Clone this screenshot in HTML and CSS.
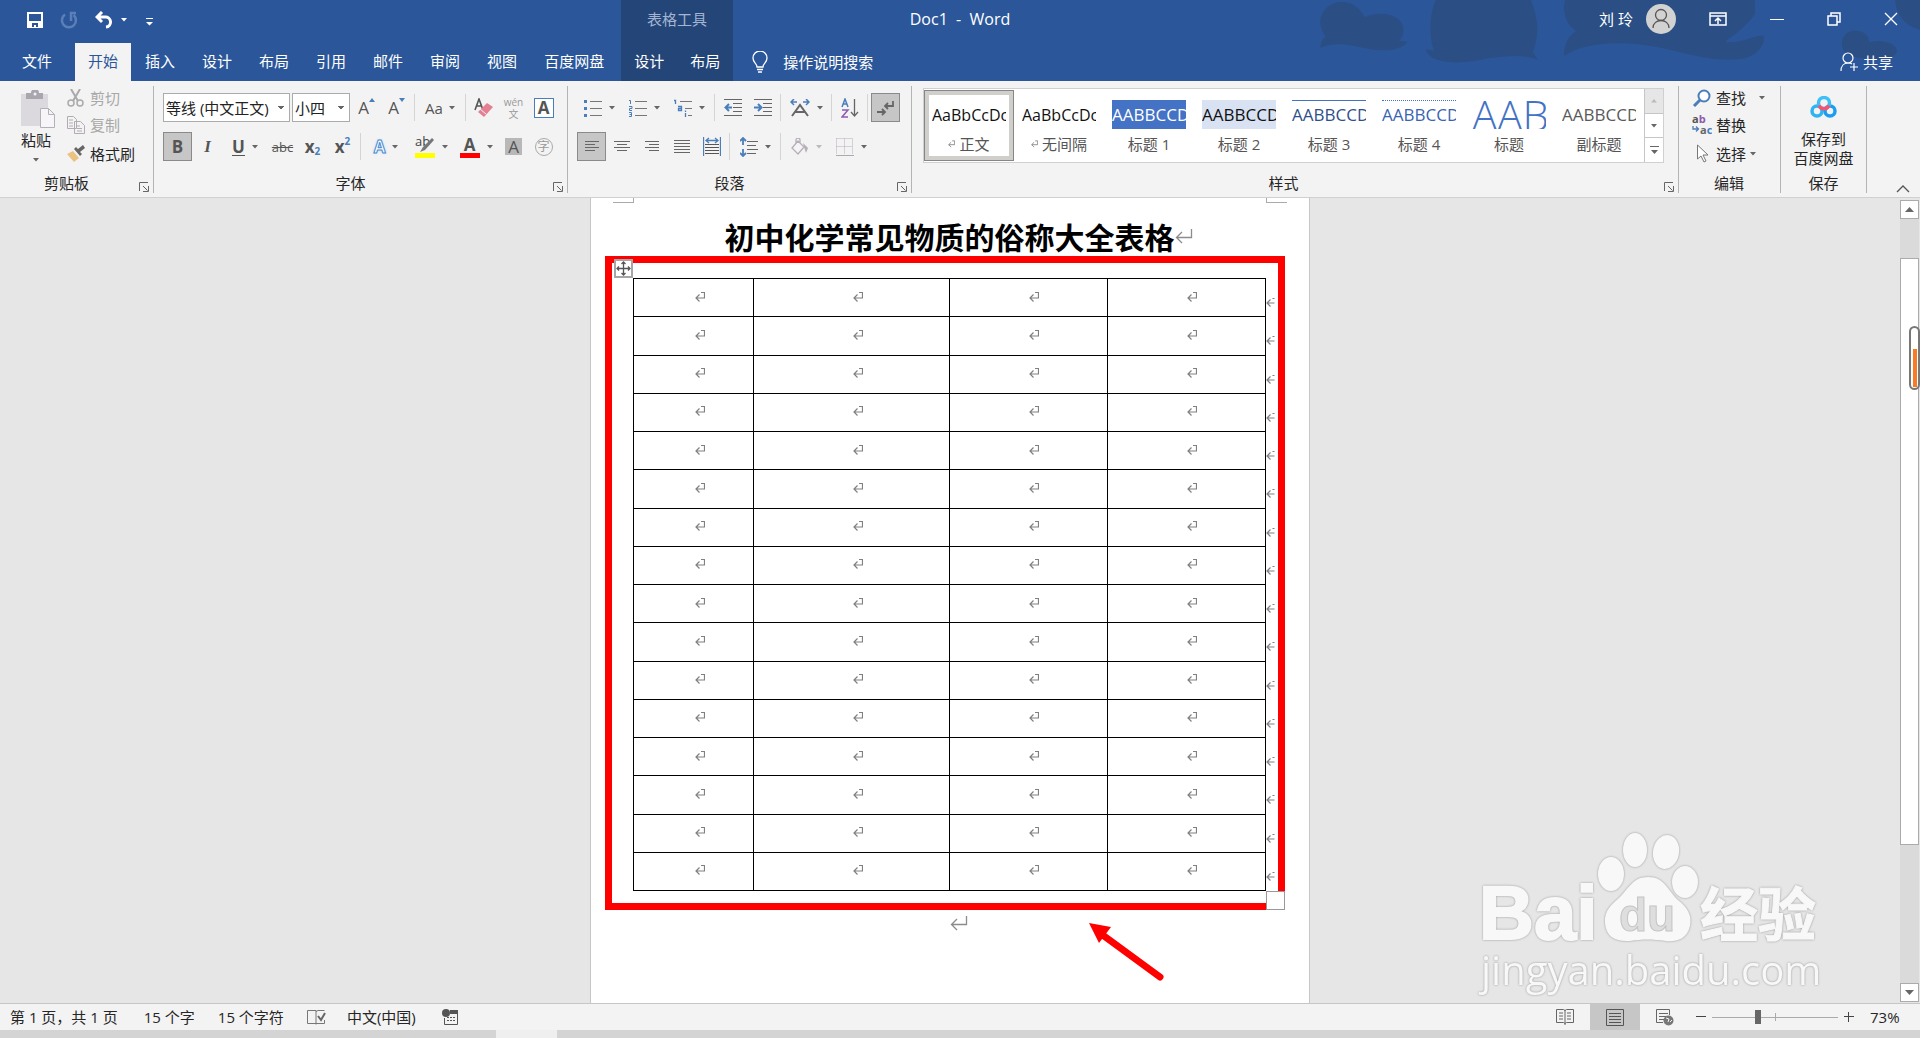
FILE: index.html
```html
<!DOCTYPE html>
<html lang="zh-CN">
<head>
  <meta charset="UTF-8" />
  <meta name="viewport" content="width=device-width, initial-scale=1.0" />
  <title>Doc1 - Word</title>
  <link rel="stylesheet" href="styles.css">
</head>
<body>

  <!-- shared symbols -->
  <svg class="defs" aria-hidden="true">
    <symbol id="mark" viewBox="0 0 10 10"><path d="M6 .5h3.500v5.500H1M4.500 2.500 1 6l3.500 3.500" fill="none" stroke="#808080" stroke-width="1.200"/></symbol>
    <symbol id="mark-end" viewBox="0 0 10 10"><path d="M6.500 1.500h2M1 6h7.500M4.500 2.500 1 6l3.500 3.500" fill="none" stroke="#808080" stroke-width="1.200"/></symbol>
    <symbol id="mark-big" viewBox="0 0 18 16"><path d="M16.500 1v8.500H1.500M7 4 1.500 9.500 7 15" fill="none" stroke="#8c8c8c" stroke-width="1.300"/></symbol>
    <symbol id="caret" viewBox="0 0 6 4"><path d="M0 0h6L3 3.500z" fill="currentColor"/></symbol>
    <symbol id="launch" viewBox="0 0 10 10"><path d="M.5 9V.5H9M4 4l4.500 4.500M9.500 4v5.500H4" fill="none" stroke="#666"/></symbol>
  </svg>

  <header class="header">
    <svg class="art" viewBox="0 0 630 81" aria-hidden="true">
      <path d="M30 48q2-12 6-11C24 22 32 4 50 2c12-1 20 6 25 15 14-6 34-4 38 9 2 8-2 13-4 15 6 0 10 0 7 3-12 10-34 6-52 2-14-3-26-2-34 2z"/>
      <path d="M146 0h95c8 20 8 36 2 52l5 8c-14-6-30-4-48-2-18 4-34 6-48 3-10-2-16-7-16-12l8 2C138 34 140 12 146 0z"/>
      <path d="M275 0h190v14c-8 12-22 22-30 28 18 2 30-8 39-6 2 10-10 22-24 23-34 4-62-10-96-14-28-4-62-2-80 11q0-18 12-25C276 24 272 12 275 0z"/>
      <path d="M552 46c-2-22 28-18 27-4 12-2 26 0 28 8 0 9-16 11-30 9-14-2-24-4-25-13zM605 0h25v30c-14-4-24-14-25-30z"/>
    </svg>

    <div class="titlebar">
      <div class="quick">
        <button aria-label="保存"><svg width="16" height="16" viewBox="0 0 16 16"><path d="M1 1h14v14H1z" fill="none" stroke="#fff" stroke-width="2"/><path d="M1 9h14v7H1z" fill="#fff"/><path d="M5 11h6v4H9v-2H7v2H5z" fill="#2b579a"/></svg></button>
        <button aria-label="重复"><svg width="18" height="18" viewBox="0 0 18 18"><path d="M5 3.500A7 7 0 1 0 13.500 4M11 10V2h5" fill="none" stroke="#5b7fb8" stroke-width="2.500"/></svg></button>
        <button aria-label="撤消"><svg width="18" height="18" viewBox="0 0 18 18"><path d="M3 6h7a5 5 0 0 1 1 10M7 1 2 6l5 5" fill="none" stroke="#fff" stroke-width="3"/></svg></button>
        <svg class="caret wide"><use href="#caret"/></svg>
        <button aria-label="自定义快速访问工具栏"><svg width="7" height="8" viewBox="0 0 7 8"><path d="M0 0h7v1H0zM0 4h7L3.500 7.500z" fill="#fff"/></svg></button>
      </div>
      <div class="context-title">表格工具</div>
      <h1 class="doc-title">Doc1&nbsp; -&nbsp; Word</h1>
      <div class="window-tools">
        <span class="user">刘 玲</span>
        <svg class="avatar" viewBox="0 0 30 30"><circle cx="15" cy="15" r="15" fill="#d2d2d2"/><circle cx="15" cy="11" r="5.500" fill="none" stroke="#555" stroke-width="1.300"/><path d="M7 24c0-10 16-10 16 0" fill="none" stroke="#555" stroke-width="1.300"/></svg>
        <button aria-label="功能区显示选项"><svg width="18" height="14" viewBox="0 0 18 14"><path d="M1 1h16v12H1zM1 4h16M9 12V6M6 9l3-3 3 3" fill="none" stroke="#fff" stroke-width="1.500"/></svg></button>
        <button aria-label="最小化"><svg width="14" height="14" viewBox="0 0 14 14"><path d="M0 7.500h14" stroke="#fff"/></svg></button>
        <button aria-label="还原"><svg width="14" height="14" viewBox="0 0 14 14"><path d="M1 4h9v9H1zM4 4V1h9v9h-3" fill="none" stroke="#fff" stroke-width="1.500"/></svg></button>
        <button aria-label="关闭"><svg width="14" height="14" viewBox="0 0 14 14"><path d="m1 1 12 12M13 1 1 13" stroke="#fff" stroke-width="1.300"/></svg></button>
      </div>
    </div>

    <nav class="tabs">
      <button class="tab file">文件</button>
      <button class="tab active">开始</button>
      <button class="tab">插入</button>
      <button class="tab">设计</button>
      <button class="tab">布局</button>
      <button class="tab">引用</button>
      <button class="tab">邮件</button>
      <button class="tab">审阅</button>
      <button class="tab">视图</button>
      <button class="tab">百度网盘</button>
      <div class="context-tabs">
        <button class="tab">设计</button>
        <button class="tab">布局</button>
      </div>
      <button class="tell-me">
        <svg width="16" height="22" viewBox="0 0 16 22"><path d="M5 16c0-4-4-4-4-9a7 7 0 0 1 14 0c0 5-4 5-4 9zM5 18.500h6M6 21h4" fill="none" stroke="#fff" stroke-width="1.300"/></svg>
        操作说明搜索
      </button>
      <button class="share">
        <svg width="19" height="20" viewBox="0 0 19 20"><circle cx="8" cy="6" r="5" fill="none" stroke="#fff" stroke-width="1.200"/><path d="M1 19c0-5 3-8 7-8 2 0 3 0 4 1M14 11v8M10 15h8" fill="none" stroke="#fff" stroke-width="1.200"/></svg>
        共享
      </button>
    </nav>
  </header>

  <section class="ribbon">
    <div class="group clipboard">
      <div class="group-body">
        <button class="paste">
          <svg width="34" height="38" viewBox="0 0 34 38"><path d="M0 4h27v32H0z" fill="#dcd9de"/><path d="M5 3h5a4 4 0 0 1 8 0h4v6H5z" fill="#aaa6ad"/><circle cx="14" cy="4" r="1.500" fill="#f3f3f3"/><path d="M19.500 18.500h8l6 6v13h-14zM27.500 18.500v6h6" fill="#f7f5f8" stroke="#b5b0b8"/></svg>
          <span>粘贴</span>
          <svg class="caret"><use href="#caret"/></svg>
        </button>
        <div class="stack">
          <button class="item off"><svg width="18" height="18" viewBox="0 0 18 18"><path d="m4 0 7 12M13 0 6 12" stroke="#aaa" stroke-width="2"/><circle cx="4" cy="14" r="3" fill="none" stroke="#aaa" stroke-width="1.500"/><circle cx="13" cy="14" r="3" fill="none" stroke="#aaa" stroke-width="1.500"/></svg>剪切</button>
          <button class="item off"><svg width="18" height="18" viewBox="0 0 18 18"><path d="M.5.5h6l3 3v9h-9zM7.500 5.500h6l4 4v8h-10zM2 4h4M2 7h4M2 10h4M10 10h3M10 12.500h5M10 15h5" fill="#f3f3f3" stroke="#b0acb2"/></svg>复制</button>
          <button class="item"><svg width="18" height="18" viewBox="0 0 18 18"><path d="m0 9 6-3 6 7-5 4z" fill="#eac282"/><path d="m7 4 6 7 2-2-2-2 5-4-2-3-5 4-2-2z" fill="#666"/></svg>格式刷</button>
        </div>
      </div>
      <div class="group-label">剪贴板<svg class="launch"><use href="#launch"/></svg></div>
    </div>

    <div class="group font">
      <div class="group-body rows">
        <div class="row">
          <select class="combo name" aria-label="字体"><option>等线 (中文正文)</option></select>
          <select class="combo size" aria-label="字号"><option>小四</option></select>
          <button class="btn grow" aria-label="增大字号">A<svg width="6" height="4"><path d="M0 4h6L3 0z" fill="#4a7ebb"/></svg></button>
          <button class="btn grow" aria-label="减小字号">A<svg width="6" height="4"><path d="M0 0h6L3 4z" fill="#4a7ebb"/></svg></button>
          <i class="sep"></i>
          <button class="btn split case" aria-label="更改大小写"><span>Aa</span><svg class="caret"><use href="#caret"/></svg></button>
          <i class="sep"></i>
          <button class="btn" aria-label="清除格式"><svg width="20" height="20" viewBox="0 0 20 20"><path d="m1 12 4-11 4 11M2 8h6" fill="none" stroke="#555" stroke-width="1.600"/><path d="m13 5 6 4-9 10-6-5z" fill="#e57f92"/><path d="m6 11 6 5" stroke="#f3f3f3"/></svg></button>
          <button class="btn phonetic" aria-label="拼音指南"><span>wén</span><span>文</span></button>
          <button class="btn" aria-label="字符边框"><span class="boxed">A</span></button>
        </div>
        <div class="row">
          <button class="btn on"><b>B</b></button>
          <button class="btn italic">I</button>
          <button class="btn split"><span class="under">U</span><svg class="caret"><use href="#caret"/></svg></button>
          <button class="btn strike">abc</button>
          <button class="btn"><b>x</b><sub>2</sub></button>
          <button class="btn"><b>x</b><sup>2</sup></button>
          <i class="sep"></i>
          <button class="btn split"><span class="glow">A</span><svg class="caret"><use href="#caret"/></svg></button>
          <button class="btn split" aria-label="突出显示"><svg width="20" height="22" viewBox="0 0 20 22"><text x="0" y="10" font-size="13" fill="#444">ab</text><path d="m17 2 2 2-9 10-5 2 3-5z" fill="#777"/><path d="M0 17h20v5H0z" fill="#ff0"/></svg><svg class="caret"><use href="#caret"/></svg></button>
          <button class="btn split"><span class="colored">A</span><svg class="caret"><use href="#caret"/></svg></button>
          <button class="btn"><span class="shaded">A</span></button>
          <button class="btn"><span class="circled">字</span></button>
        </div>
      </div>
      <div class="group-label">字体<svg class="launch"><use href="#launch"/></svg></div>
    </div>

    <div class="group para">
      <div class="group-body rows">
        <div class="row">
          <button class="btn split" aria-label="项目符号"><svg width="18" height="18" viewBox="0 0 18 18"><path d="M6 2.500h12M6 9.500h12M6 16.500h12" stroke="#777"/><path d="M0 1h3v3H0zM0 8h3v3H0zM0 15h3v3H0z" fill="#4a7ebb"/></svg><svg class="caret"><use href="#caret"/></svg></button>
          <button class="btn split" aria-label="编号"><svg width="18" height="18" viewBox="0 0 18 18"><path d="M6 2.500h12M6 9.500h12M6 16.500h12" stroke="#777"/><path d="M0 1.500h1.500V5M0 7.500h3v2H.5v2H3M0 13.500h2.500v4H0M.5 15.500h2" fill="none" stroke="#4a7ebb"/></svg><svg class="caret"><use href="#caret"/></svg></button>
          <button class="btn split" aria-label="多级列表"><svg width="18" height="18" viewBox="0 0 18 18"><path d="M6 2.500h12M11 9.500h7M14 16.500h4" stroke="#777"/><path d="M0 1.500h1.500V5M4 7.500h3.500v4h-3v-2h3M11.500 14v4M11.500 11.500V13" fill="none" stroke="#4a7ebb" stroke-width="1.300"/></svg><svg class="caret"><use href="#caret"/></svg></button>
          <i class="sep"></i>
          <button class="btn" aria-label="减少缩进"><svg width="18" height="17" viewBox="0 0 18 17"><path d="M0 .5h18M9 4.500h9M9 8.500h9M9 12.500h9M0 16.500h18" stroke="#666"/><path d="M8 8.500H2M5 5 1.500 8.500 5 12" fill="none" stroke="#4a7ebb" stroke-width="2"/></svg></button>
          <button class="btn" aria-label="增加缩进"><svg width="18" height="17" viewBox="0 0 18 17"><path d="M0 .5h18M9 4.500h9M9 8.500h9M9 12.500h9M0 16.500h18" stroke="#666"/><path d="M0 8.500h6M4 5l3.500 3.500L4 12" fill="none" stroke="#4a7ebb" stroke-width="2"/></svg></button>
          <i class="sep"></i>
          <button class="btn split" aria-label="中文版式"><svg width="20" height="18" viewBox="0 0 20 18"><path d="M2 17 10 6l8 11M5 13h10" fill="none" stroke="#666" stroke-width="2"/><path d="M1 3h6M4 0 1 3l3 3M13 3h6M16 0l3 3-3 3" fill="none" stroke="#4a7ebb" stroke-width="1.500"/></svg><svg class="caret"><use href="#caret"/></svg></button>
          <i class="sep"></i>
          <button class="btn" aria-label="排序"><svg width="18" height="20" viewBox="0 0 18 20"><path d="m1 9 3-8 3 8M2 6h4" fill="none" stroke="#4a7ebb" stroke-width="1.500"/><path d="M1 12h6l-6 7h6" fill="none" stroke="#8e5bb0" stroke-width="1.500"/><path d="M13.500 1v17M10 14l3.500 4 3.500-4" fill="none" stroke="#666" stroke-width="1.300"/></svg></button>
          <i class="sep"></i>
          <button class="btn on" aria-label="显示编辑标记"><svg width="18" height="16" viewBox="0 0 18 16"><path d="M16 1v5H9M11 3 8 6l3 3M0 12h7M5 9l3 3-3 3" fill="none" stroke="#666" stroke-width="1.800"/></svg></button>
        </div>
        <div class="row">
          <button class="btn on" aria-label="左对齐"><svg width="14" height="12"><path d="M0 .5h14M0 3.500h10M0 6.500h14M0 9.500h10" stroke="#666"/></svg></button>
          <button class="btn" aria-label="居中"><svg width="16" height="12"><path d="M0 .5h16M3 3.500h10M0 6.500h16M3 9.500h10" stroke="#666"/></svg></button>
          <button class="btn" aria-label="右对齐"><svg width="14" height="12"><path d="M0 .5h14M4 3.500h10M0 6.500h14M4 9.500h10" stroke="#666"/></svg></button>
          <button class="btn" aria-label="两端对齐"><svg width="16" height="13"><path d="M0 .5h16M0 3.500h16M0 6.500h16M0 9.500h16M0 12.500h16" stroke="#666"/></svg></button>
          <button class="btn" aria-label="分散对齐"><svg width="18" height="19" viewBox="0 0 18 19"><path d="M.5 0v19M17.500 0v19M3 3.500h12M6 1 3 3.500 6 6M12 1l3 2.500L12 6" fill="none" stroke="#4a7ebb" stroke-width="1.300"/><path d="M2 7.500h14M2 10.500h14M2 13.500h14M2 16.500h14" stroke="#555"/></svg></button>
          <i class="sep"></i>
          <button class="btn split" aria-label="行距"><svg width="18" height="20" viewBox="0 0 18 20"><path d="M7 4.500h11M7 8.500h9M7 12.500h11M7 16.500h9" stroke="#666"/><path d="M3 1v7M0 4l3-3 3 3M3 12v7M0 16l3 3 3-3" fill="none" stroke="#4a7ebb" stroke-width="1.800"/></svg><svg class="caret"><use href="#caret"/></svg></button>
          <i class="sep"></i>
          <button class="btn split off" aria-label="底纹"><svg width="18" height="18" viewBox="0 0 18 18"><path d="m7 3 6 6-6 7-6-6zM5 5V2a2 2 0 0 1 4 0v3" fill="#f5f3f6" stroke="#b5b0b8" stroke-width="1.300"/><path d="m12 5 5 5-2 5-2-6z" fill="#b5b0b8"/></svg><svg class="caret"><use href="#caret"/></svg></button>
          <button class="btn split" aria-label="边框"><svg width="18" height="18" viewBox="0 0 18 18"><path d="M.5.5h16v16M.5.5v16M8.500.5v16M.5 8.500h16" fill="none" stroke="#b9a9bd" stroke-dasharray="1 1"/><path d="M0 17.500h18" stroke="#aaa"/></svg><svg class="caret"><use href="#caret"/></svg></button>
        </div>
      </div>
      <div class="group-label">段落<svg class="launch"><use href="#launch"/></svg></div>
    </div>

    <div class="group styles">
      <div class="group-body">
        <div class="gallery">
          <button class="style selected"><span class="preview">AaBbCcDc</span><span class="style-name"><svg class="tiny"><use href="#mark"/></svg>正文</span></button>
          <button class="style"><span class="preview">AaBbCcDc</span><span class="style-name"><svg class="tiny"><use href="#mark"/></svg>无间隔</span></button>
          <button class="style"><span class="preview h1">AABBCCD</span><span class="style-name">标题 1</span></button>
          <button class="style"><span class="preview h2">AABBCCD</span><span class="style-name">标题 2</span></button>
          <button class="style"><span class="preview h3">AABBCCD</span><span class="style-name">标题 3</span></button>
          <button class="style"><span class="preview h4">AABBCCD</span><span class="style-name">标题 4</span></button>
          <button class="style"><span class="preview title">AAB</span><span class="style-name">标题</span></button>
          <button class="style"><span class="preview sub">AABBCCD</span><span class="style-name">副标题</span></button>
          <div class="gallery-nav">
            <button class="off" aria-label="上一行"><svg width="6" height="4"><path d="M0 3.500h6L3 0z" fill="#bbb"/></svg></button>
            <button aria-label="下一行"><svg class="caret"><use href="#caret"/></svg></button>
            <button aria-label="其他"><svg width="9" height="8"><path d="M0 0h9v1H0zM1 4h7L4.500 8z" fill="#666"/></svg></button>
          </div>
        </div>
      </div>
      <div class="group-label">样式<svg class="launch"><use href="#launch"/></svg></div>
    </div>

    <div class="group edit">
      <div class="group-body">
        <div class="stack">
          <button class="item"><svg width="20" height="18" viewBox="0 0 20 18"><circle cx="12" cy="7" r="5.500" fill="#fff" stroke="#4a7ebb" stroke-width="2"/><path d="m8 11-6 6" stroke="#4a7ebb" stroke-width="3"/></svg>查找<svg class="caret far"><use href="#caret"/></svg></button>
          <button class="item"><svg width="20" height="20" viewBox="0 0 20 20"><g font-size="11" font-weight="bold"><text x="0" y="8" fill="#555">a<tspan fill="#8e5bb0">b</tspan></text><text x="8" y="19" fill="#666">a<tspan fill="#4a7ebb">c</tspan></text></g><path d="M1 11v3h5M4 11.500 6.500 14 4 16.500" fill="none" stroke="#4a7ebb" stroke-width="1.300"/></svg>替换</button>
          <button class="item"><svg width="20" height="20" viewBox="0 0 20 20"><path d="M5.500 1v14l3.500-3 3 6 2-1-3-6h5z" fill="#fff" stroke="#777"/></svg>选择<svg class="caret"><use href="#caret"/></svg></button>
        </div>
      </div>
      <div class="group-label">编辑</div>
    </div>

    <div class="group save">
      <div class="group-body">
        <button class="netdisk">
          <svg width="28" height="22" viewBox="0 0 28 22"><g fill="none" stroke-width="3.500"><circle cx="7" cy="15" r="5" stroke="#2fb4f2"/><circle cx="20" cy="15" r="5" stroke="#1b9df0"/><circle cx="14" cy="7" r="5.500" stroke="#3dc0f5"/><path d="M9 9.500a5.500 5.500 0 0 0 10 0" stroke="#f3566f"/></g></svg>
          <span>保存到<br>百度网盘</span>
        </button>
      </div>
      <div class="group-label">保存</div>
    </div>
    <button class="collapse" aria-label="折叠功能区"><svg width="14" height="8"><path d="m1 7 6-6 6 6" fill="none" stroke="#555" stroke-width="1.300"/></svg></button>
  </section>

  <main class="workspace">
    <div class="canvas">
      <article class="page">
        <i class="corner left"></i>
        <i class="corner right"></i>
        <h2>初中化学常见物质的俗称大全表格<svg class="mark-big"><use href="#mark-big"/></svg></h2>
        <div class="table-wrap">
          <table>
            <colgroup><col class="c1"><col class="c2"><col class="c3"><col class="c4"></colgroup>
            <tbody id="rows"></tbody>
          </table>
          <div class="frame"></div>
          <svg class="move" viewBox="0 0 19 19"><path d="M1 1h17v17H1z" fill="#fff" stroke="#a6a6a6" stroke-width="2"/><path d="M9.500 3v13M3 9.500h13M7.500 5l2-2 2 2M7.500 14l2 2 2-2M5 7.500l-2 2 2 2M14 7.500l2 2-2 2" fill="none" stroke="#555" stroke-width="1.300"/></svg>
          <i class="resize"></i>
        </div>
        <p class="after"><svg class="mark-big"><use href="#mark-big"/></svg></p>
        <svg class="arrow" viewBox="0 0 80 62"><path d="M16 14 72 55" stroke="#f00" stroke-width="7" stroke-linecap="round"/><path d="M1 1 23 5 11 21z" fill="#f00"/></svg>
      </article>
    </div>

    <svg class="watermark" viewBox="0 0 352 172" aria-hidden="true">
      <g fill="#f8f8f8">
        <text x="2" y="109" class="wm-baidu">Bai</text>
        <ellipse cx="134" cy="44" rx="13" ry="17"/>
        <ellipse cx="158" cy="20" rx="12" ry="17"/>
        <ellipse cx="189" cy="22" rx="13" ry="17" transform="rotate(10 189 22)"/>
        <ellipse cx="208" cy="52" rx="13" ry="16"/>
        <path d="M171 47c17 0 20 14 30 23 10 8 14 16 12 26-3 14-15 16-24 15-14-2-24-2-36 0-14 1-24-4-25-18-1-12 6-18 15-26 9-9 13-20 28-20z"/>
        <text x="142" y="101" class="wm-du">du</text>
        <text x="223" y="106" class="wm-cn">经验</text>
        <text x="4" y="155" class="wm-url">jingyan.baidu.com</text>
      </g>
    </svg>

    <div class="scrollbar">
      <button aria-label="向上滚动"><svg width="9" height="5"><path d="M0 5h9L4.500 0z" fill="#666"/></svg></button>
      <div class="track"><div class="thumb"></div></div>
      <button aria-label="向下滚动"><svg width="9" height="5"><path d="M0 0h9L4.500 5z" fill="#666"/></svg></button>
    </div>
    <div class="gauge"></div>
  </main>

  <footer class="status">
    <span class="pages">第 1 页，共 1 页</span>
    <span>15 个字</span>
    <span>15 个字符</span>
    <svg width="19" height="17" viewBox="0 0 19 17"><path d="M9 14.500H.5V1.500H9v14M9 2.500l2-1h6.500M9 14.500h8.500V11" fill="none" stroke="#777"/><path d="m11 7 3 4 4-7" fill="none" stroke="#666" stroke-width="2"/></svg>
    <span class="lang">中文(中国)</span>
    <svg width="16" height="16" viewBox="0 0 16 16"><circle cx="4" cy="4" r="4" fill="#555"/><path d="M8 1h8v4H8z" fill="#555"/><path d="M2.500 9v6.500h13V5" fill="none" stroke="#555"/><path d="M5 8.500h9M5 11.500h9" stroke="#555" stroke-dasharray="2 1"/></svg>

    <div class="views">
      <button aria-label="阅读视图"><svg width="18" height="16" viewBox="0 0 18 16"><path d="M.5.500h7l1.500 1 1.500-1h7v13h-7l-1.500 1-1.500-1h-7zM9 1v15M3 4h4M3 7h4M3 10h4M11 4h4M11 7h4M11 10h4" fill="none" stroke="#666"/></svg></button>
      <button class="on" aria-label="页面视图"><svg width="18" height="17" viewBox="0 0 18 17"><path d="M.5.500h17v16H.5zM3 4.500h12M3 7.500h12M3 10.500h12M3 13.500h12" fill="none" stroke="#555"/></svg></button>
      <button aria-label="Web 版式视图"><svg width="18" height="17" viewBox="0 0 18 17"><path d="M7 13.500H.5V.500h13V6M3 4.500h9M3 7.500h7M3 10.500h5" fill="none" stroke="#666"/><circle cx="12.500" cy="11.500" r="5" fill="#777"/><path d="M10 9l3 1-1 3M14 13l2-2" fill="none" stroke="#f3f3f3"/></svg></button>
    </div>
    <button class="zoom-btn" aria-label="缩小"><svg width="10" height="10"><path d="M0 4.500h10" stroke="#444"/></svg></button>
    <input class="zoom" type="range" min="10" max="185" value="73" aria-label="缩放">
    <button class="zoom-btn" aria-label="放大"><svg width="10" height="10"><path d="M0 4.500h10M4.500 0v10" stroke="#444"/></svg></button>
    <span class="percent">73%</span>
  </footer>
  <div class="taskbar"><i></i></div>

  <script>
    const cell = '<td><svg class="mark"><use href="#mark"/></svg></td>';
    const last = '<td><svg class="mark"><use href="#mark"/></svg><svg class="mark end"><use href="#mark-end"/></svg></td>';

    document.getElementById("rows").innerHTML = `<tr>${cell.repeat(3)}${last}</tr>`.repeat(16);
  </script>
</body>
</html>
```
FILE: styles.css
```css
* {
  box-sizing: border-box;
}

body {
  margin: 0;
  padding-right: 8px;
  height: 100vh;
  display: flex;
  flex-direction: column;
  overflow: hidden;
  background: #fff;
  color: #262626;
  font-family: "Open Sans", "Noto Sans CJK SC", sans-serif;
  font-size: 15px;
  line-height: 20px;
}

button {
  display: flex;
  align-items: center;
  justify-content: center;
  margin: 0;
  padding: 0;
  border: none;
  background: none;
  color: inherit;
  font: inherit;
  white-space: nowrap;
}

svg {
  flex: none;
}

.defs {
  position: absolute;
  width: 0;
  height: 0;
}

.caret {
  width: 6px;
  height: 4px;
  color: #666;
}

/* header */
.header {
  position: relative;
  background: #2b579a;
  color: #fff;
}

.art {
  position: absolute;
  top: 0;
  right: 0;
  width: 630px;
  height: 81px;
  fill: #2b4f85;
}

.titlebar {
  position: relative;
  display: flex;
  height: 43px;
}

.quick {
  display: flex;
  align-items: center;
  width: 621px;
  padding: 0 0 4px 27px;
}

.quick button + button {
  margin-left: 17px;
}

.quick .caret {
  margin-left: 8px;
  color: #fff;
}

.quick .caret + button {
  margin: 4px 0 0 19px;
}

.context-title {
  width: 112px;
  padding-top: 9px;
  background: #234578;
  color: #a3b5d3;
  text-align: center;
}

.doc-title {
  position: absolute;
  top: 9px;
  left: 50%;
  transform: translateX(-50%);
  margin: 0;
  font-size: 16px;
  font-weight: normal;
  white-space: nowrap;
}

.window-tools {
  display: flex;
  align-items: center;
  margin-left: auto;
  padding: 0 22px 5px 0;
}

.avatar {
  width: 30px;
  height: 30px;
  margin: 0 33px 0 13px;
}

.window-tools button + button {
  margin-left: 43px;
}

.tabs {
  position: relative;
  display: flex;
  align-items: stretch;
  gap: 1px;
  height: 38px;
}

.tab {
  padding: 0 13px 2px;
}

.file {
  width: 74px;
}

.active {
  background: #f3f3f3;
  color: #2b579a;
}

.context-tabs {
  display: flex;
  margin-left: 3px;
  background: #234578;
}

.tell-me,
.share {
  gap: 15px;
  margin-left: 18px;
}

.share {
  gap: 4px;
  margin: 0 27px 0 auto;
}

/* ribbon */
.ribbon {
  display: flex;
  height: 117px;
  padding-top: 5px;
  background: #f3f3f3;
  border-bottom: 1px solid #d0d0d0;
}

.group {
  position: relative;
  display: flex;
  flex-direction: column;
  height: 107px;
  border-right: 1px solid #b4b4b4;
}

.group-body {
  display: flex;
  height: 88px;
}

.group-label {
  margin-top: 2px;
  padding-right: 20px;
  text-align: center;
  line-height: 20px;
}

.launch {
  position: absolute;
  right: 4px;
  bottom: 1px;
  width: 10px;
  height: 10px;
}

.clipboard {
  width: 154px;
}

.paste {
  flex-direction: column;
  justify-content: flex-start;
  width: 72px;
  padding-top: 4px;
}

.paste svg:first-child {
  margin-left: 4px;
}

.paste span {
  margin: 2px 0 8px;
}

.stack {
  display: flex;
  flex-direction: column;
}

.item {
  justify-content: flex-start;
  gap: 5px;
  height: 29px;
}

.clipboard .item {
  margin-left: -5px;
}

.stack .item:first-child {
  height: 24px;
}

.item.off {
  color: #a8a8a8;
}

.rows {
  flex-direction: column;
  gap: 10px;
  padding: 7px 0 0 9px;
}

.row {
  display: flex;
  gap: 1px;
  height: 29px;
}

.font {
  width: 414px;
}

.combo {
  width: 127px;
  margin-right: 1px;
  padding: 0 0 0 2px;
  border: 1px solid #ababab;
  border-radius: 0;
  appearance: none;
  background:
    linear-gradient(to bottom left, #666 50%, transparent 50%) no-repeat right 8px center / 3px 4px,
    linear-gradient(to bottom right, #666 50%, transparent 50%) no-repeat right 5px center / 3px 4px,
    #fff;
  color: #222;
  font: inherit;
}

.combo.size {
  width: 58px;
}

.sep {
  width: 1px;
  height: 27px;
  margin: 1px 2px 0;
  background: #d4d4d4;
}

.btn {
  width: 29px;
  height: 29px;
  color: #555;
  font-size: 17px;
}

.btn.on {
  border: 1px solid #8a8a8a;
  background: #c6c6c6;
}

.split {
  width: 44px;
  gap: 7px;
}

.split.off .caret {
  color: #bbb;
}

.case {
  gap: 6px;
  font-size: 15px;
}

.grow svg {
  align-self: flex-start;
  margin-top: 5px;
}

.phonetic {
  flex-direction: column;
  color: #999;
  font-size: 10px;
  line-height: 12px;
}

.boxed {
  width: 20px;
  border: 1px solid #4a7ebb;
  background: #fff;
  line-height: 18px;
  font-weight: bold;
}

.italic {
  font-family: "Liberation Serif", serif;
  font-style: italic;
  font-weight: bold;
}

.under {
  border-bottom: 1px solid #555;
  line-height: 17px;
  font-weight: bold;
}

.strike {
  font-size: 13px;
  text-decoration: line-through;
}

.btn sub,
.btn sup {
  color: #4a7ebb;
  font-size: 10px;
  font-weight: bold;
}

.btn sub {
  margin-top: 8px;
}

.btn sup {
  margin-bottom: 12px;
}

.glow {
  color: #fff;
  font-weight: bold;
  -webkit-text-stroke: 1px #4a8ad0;
  text-shadow: 0 0 3px #a8cdf0;
}

.colored {
  width: 20px;
  border-bottom: 5px solid #f00;
  line-height: 17px;
  font-weight: bold;
}

.shaded {
  width: 17px;
  background: #b8b8b8;
  line-height: 17px;
}

.circled {
  width: 18px;
  height: 18px;
  border: 1px solid #aaa;
  border-radius: 50%;
  color: #999;
  font-size: 12px;
  line-height: 15px;
}

.para {
  width: 344px;
}

.styles {
  flex: 1;
  padding: 0 14px 0 11px;
}

.styles .launch {
  right: 4px;
}

.gallery {
  display: flex;
  flex: 1;
  height: 75px;
  margin-top: 2px;
  border: 1px solid #d0d0d0;
  background: #fff;
}

.style {
  flex: 1;
  flex-direction: column;
  justify-content: flex-start;
  margin: 1px 0;
  padding: 9px 7px 0;
  border: 1px solid transparent;
}

.style.selected {
  border-color: #868686;
  outline: 4px solid #d0cfcb;
  outline-offset: -5px;
}

.preview {
  width: 74px;
  height: 29px;
  overflow: hidden;
  font-size: 16px;
  line-height: 30px;
  text-align: left;
  color: #111;
}

.preview.h1,
.preview.h2,
.preview.h3,
.preview.h4,
.preview.sub {
  font-size: 17px;
}

.preview.h1 {
  background: #4472c4;
  color: #fff;
}

.preview.h2 {
  background: #d9e2f3;
}

.preview.h3 {
  border-top: 1px solid #4472c4;
  color: #2f4f8a;
  line-height: 28px;
}

.preview.h4 {
  border-top: 1px dotted #4472c4;
  color: #3a64b0;
  line-height: 28px;
}

.preview.title {
  color: #4472c4;
  font-size: 42px;
  font-weight: 300;
}

.preview.sub {
  color: #5a5a5a;
}

.style-name {
  display: flex;
  align-items: center;
  gap: 4px;
  margin-top: 5px;
  color: #555;
}

.tiny {
  width: 7px;
  height: 10px;
}

.gallery-nav {
  display: flex;
  flex-direction: column;
  width: 19px;
  border-left: 1px solid #c6c6c6;
}

.gallery-nav button {
  flex: 1;
}

.gallery-nav button + button {
  border-top: 1px solid #c6c6c6;
}

.gallery-nav .off {
  background: #e6e6e6;
}

.edit {
  width: 102px;
  padding-left: 13px;
}

.edit .group-label {
  padding-right: 14px;
}

.edit .item {
  gap: 4px;
}

.edit .far {
  margin-left: 9px;
}

.save {
  width: 86px;
}

.save .group-label {
  padding: 0;
}

.netdisk {
  flex: 1;
  flex-direction: column;
  justify-content: flex-start;
  gap: 12px;
  padding-top: 10px;
  line-height: 19px;
}

.collapse {
  width: 53px;
  margin-left: auto;
  padding: 0 10px 4px 0;
  justify-content: flex-end;
  align-items: flex-end;
}

/* document */
.workspace {
  position: relative;
  display: flex;
  flex: 1;
  min-height: 0;
  background: #e6e6e6;
}

.canvas {
  display: flex;
  flex: 1;
  justify-content: center;
  overflow: hidden;
}

.page {
  position: relative;
  width: 720px;
  padding: 18px 43px 0 42px;
  border: solid #c6c6c6;
  border-width: 0 1px;
  background: #fff;
  color: #000;
}

.corner {
  position: absolute;
  top: 0;
  width: 21px;
  height: 5px;
  border-bottom: 1px solid #aaa;
}

.corner.left {
  left: 22px;
  border-right: 1px solid #aaa;
}

.corner.right {
  right: 22px;
  border-left: 1px solid #aaa;
}

.page h2 {
  position: relative;
  margin: 0 0 22px;
  font-family: "Noto Sans CJK SC", sans-serif;
  font-size: 30px;
  line-height: 40px;
  text-align: center;
}

.mark-big {
  width: 18px;
  height: 16px;
}

.page h2 .mark-big {
  position: absolute;
  top: 12px;
}

.table-wrap {
  position: relative;
}

table {
  width: 100%;
  height: 613px;
  table-layout: fixed;
  border-collapse: collapse;
}

.c1 { width: 19%; }
.c2 { width: 31%; }
.c3 { width: 25%; }
.c4 { width: 25%; }

td {
  position: relative;
  padding: 0 0 2px 12px;
  border: 1px solid #000;
  text-align: center;
  line-height: 0;
}

.mark {
  width: 10px;
  height: 10px;
}

.mark.end {
  position: absolute;
  top: 18px;
  right: -11px;
}

.frame {
  position: absolute;
  inset: -22px -19px -19px -28px;
  border: 7px solid #f00;
}

.move {
  position: absolute;
  top: -19px;
  left: -19px;
  width: 19px;
  height: 19px;
}

.resize {
  position: absolute;
  right: -19px;
  bottom: -19px;
  width: 19px;
  height: 19px;
  border: 1px solid #999;
  background: #fff;
}

.after {
  margin: 24px 0 0 18px;
  text-align: center;
}

.arrow {
  position: absolute;
  right: 141px;
  bottom: 19px;
  width: 80px;
  height: 62px;
}

.watermark {
  position: absolute;
  right: 91px;
  bottom: 1px;
  width: 352px;
  height: 172px;
  filter: drop-shadow(0 0 1px #999);
}

.wm-baidu {
  stroke: #f8f8f8;
  stroke-width: 2px;
  font: bold 76px "Liberation Sans", sans-serif;
}

.wm-du {
  fill: #dedede;
  stroke: #c4c4c4;
  font: bold 46px "Liberation Sans", sans-serif;
}

.wm-cn {
  stroke: #f8f8f8;
  font: bold 58px "Noto Sans CJK SC", sans-serif;
}

.wm-url {
  font: 40px "Open Sans", sans-serif;
}

.scrollbar {
  display: flex;
  flex-direction: column;
  width: 20px;
  padding: 2px 1px 1px 0;
}

.scrollbar button {
  height: 19px;
  border: 1px solid #ababab;
  background: #fff;
}

.track {
  flex: 1;
  padding-top: 39px;
  background: #dadada;
}

.thumb {
  height: 81%;
  border: 1px solid #ababab;
  background: #fff;
}

.gauge {
  position: absolute;
  top: 128px;
  right: 0;
  width: 11px;
  height: 64px;
  border: 2px solid #777;
  border-radius: 6px;
  background: linear-gradient(#f97b26, #f97b26) no-repeat center bottom 1px / 4px 38px #fff;
}

/* status bar */
.status {
  display: flex;
  align-items: center;
  height: 27px;
  padding: 0 18px 0 10px;
  border-top: 1px solid #c6c6c6;
  background: #f3f3f3;
}

.status > span {
  margin-right: 23px;
}

.status > svg {
  margin-right: 21px;
}

.status .pages,
.status .lang {
  margin-right: 26px;
}

.views {
  display: flex;
  align-self: stretch;
  margin-left: auto;
}

.views button {
  width: 50px;
}

.views .on {
  background: #c6c6c6;
}

.zoom-btn {
  width: 22px;
}

.zoom {
  width: 126px;
  height: 16px;
  margin: 0;
  appearance: none;
  background:
    linear-gradient(#aaa, #aaa) no-repeat center / 1px 8px,
    linear-gradient(#aaa, #aaa) no-repeat center / 100% 1px;
}

.zoom::-webkit-slider-thumb {
  appearance: none;
  width: 6px;
  height: 14px;
  background: #666;
}

.status .percent {
  width: 32px;
  margin: 0 0 0 10px;
}

.taskbar {
  height: 8px;
  background: #d4d4d4;
}

.taskbar i {
  display: block;
  width: 61px;
  height: 8px;
  margin-left: 496px;
  background: #efefef;
}
```
